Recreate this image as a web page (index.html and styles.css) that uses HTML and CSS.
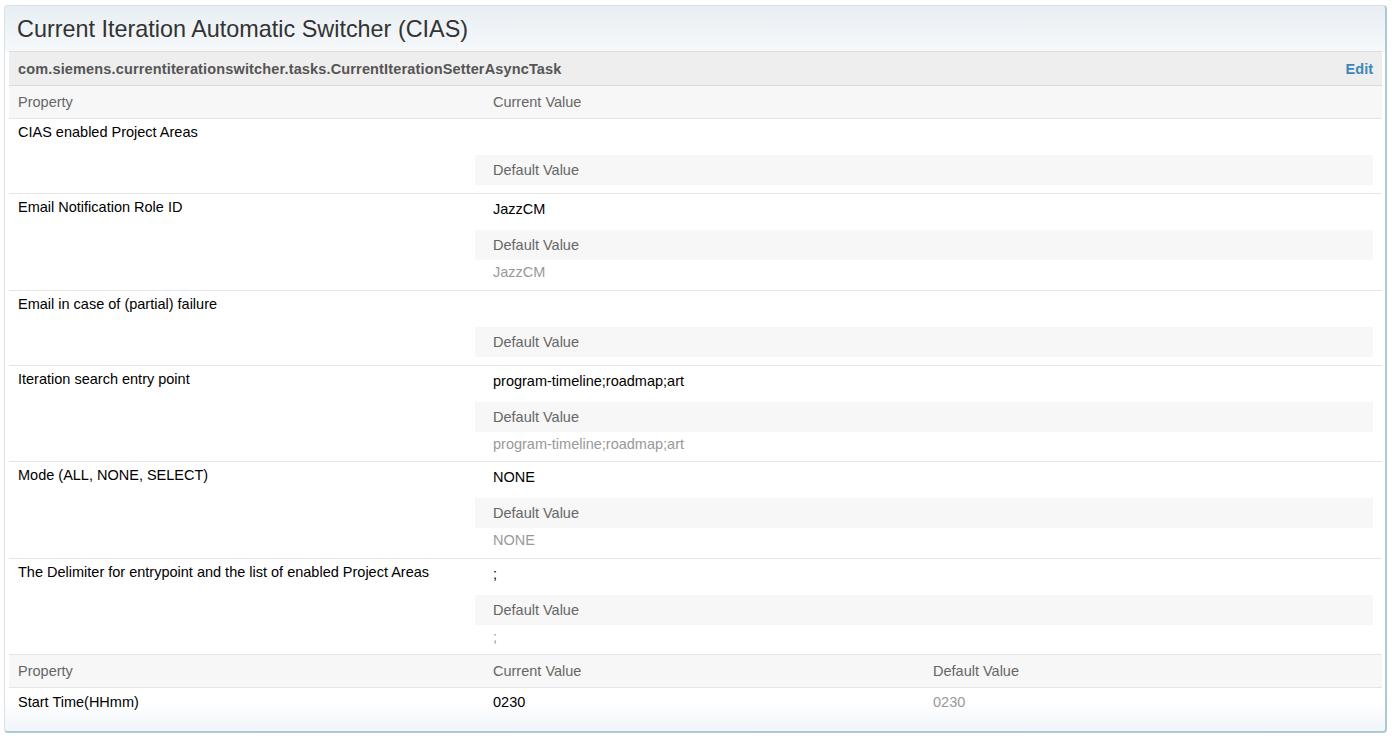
FILE: index.html
```html
<!DOCTYPE html>
<html>
<head>
<meta charset="utf-8">
<link rel="stylesheet" href="styles.css">
</head>
<body>
<div class="panel">
  <div class="title">Current Iteration Automatic Switcher (CIAS)</div>
  <div class="task">
    <span class="task-name">com.siemens.currentiterationswitcher.tasks.CurrentIterationSetterAsyncTask</span>
    <a class="edit">Edit</a>
  </div>
  <div class="head two">
    <div class="c1">Property</div>
    <div class="c2">Current Value</div>
  </div>

  <div class="row">
    <div class="label">CIAS enabled Project Areas</div>
    <div class="vals">
      <div class="cur"></div>
      <div class="defhead">Default Value</div>
      <div class="defval"></div>
    </div>
  </div>
  <div class="row">
    <div class="label">Email Notification Role ID</div>
    <div class="vals">
      <div class="cur">JazzCM</div>
      <div class="defhead">Default Value</div>
      <div class="defval">JazzCM</div>
    </div>
  </div>
  <div class="row">
    <div class="label">Email in case of (partial) failure</div>
    <div class="vals">
      <div class="cur"></div>
      <div class="defhead">Default Value</div>
      <div class="defval"></div>
    </div>
  </div>
  <div class="row">
    <div class="label">Iteration search entry point</div>
    <div class="vals">
      <div class="cur">program-timeline;roadmap;art</div>
      <div class="defhead">Default Value</div>
      <div class="defval">program-timeline;roadmap;art</div>
    </div>
  </div>
  <div class="row">
    <div class="label">Mode (ALL, NONE, SELECT)</div>
    <div class="vals">
      <div class="cur">NONE</div>
      <div class="defhead">Default Value</div>
      <div class="defval">NONE</div>
    </div>
  </div>
  <div class="row">
    <div class="label">The Delimiter for entrypoint and the list of enabled Project Areas</div>
    <div class="vals">
      <div class="cur">;</div>
      <div class="defhead">Default Value</div>
      <div class="defval">;</div>
    </div>
  </div>

  <div class="head three">
    <div class="c1">Property</div>
    <div class="c2">Current Value</div>
    <div class="c3">Default Value</div>
  </div>
  <div class="simple three">
    <div class="c1 label2">Start Time(HHmm)</div>
    <div class="c2 curval">0230</div>
    <div class="c3 defv">0230</div>
  </div>
</div>
</body>
</html>
```

FILE: styles.css
```css
html, body {
  margin: 0;
  padding: 0;
  background: #fff;
}
body {
  font-family: "Liberation Sans", Arial, sans-serif;
  font-size: 14.5px;
  color: #000;
}
.panel {
  box-sizing: border-box;
  width: 1383px;
  margin: 5px 0 0 4px;
  padding: 0 3px 16px 4px;
  border-style: solid;
  border-width: 1px 2px 2px 1px;
  border-color: #d6e2e9 #a9cad5 #a9cad5 #d6e2e9;
  border-radius: 4px;
  background:
    linear-gradient(to bottom, #e8eef3 0px, #f6f9fb 45px, #ffffff 46px, #ffffff calc(100% - 30px), #f0f5f9 100%);
}
.title {
  height: 45px;
  padding-left: 8px;
  font-size: 23.4px;
  line-height: 47px;
  color: #333;
}
.task {
  display: flex;
  justify-content: space-between;
  align-items: center;
  height: 33px;
  padding: 0 9px;
  border-top: 1px solid #dcdcdc;
  border-bottom: 1px solid #dcdcdc;
  background: #eeeeee;
  font-weight: bold;
  color: #555;
}
.task-name {
  letter-spacing: 0.15px;
}
.edit {
  color: #3a87b8;
  cursor: pointer;
}
.head {
  display: grid;
  height: 32px;
  align-items: center;
  background: #f7f7f7;
  color: #666;
  border-bottom: 1px solid #e5e5e5;
}
.two {
  grid-template-columns: 466px 1fr;
}
.three {
  display: grid;
  grid-template-columns: 466px 440px 1fr;
}
.c1 {
  padding-left: 9px;
}
.c2, .c3 {
  padding-left: 18px;
}
.row {
  display: grid;
  grid-template-columns: 466px 1fr;
  border-bottom: 1px solid #e5e5e5;
}
.label {
  padding: 5px 9px 0;
  line-height: 16px;
}
.vals {
  padding-right: 9px;
}
.cur {
  box-sizing: border-box;
  height: 36px;
  padding: 7px 18px 0;
  line-height: 16px;
}
.defhead {
  height: 30px;
  line-height: 30px;
  padding-left: 18px;
  background: #f7f7f7;
  color: #666;
}
.defval {
  padding: 2px 18px 7.5px;
  line-height: 20px;
  color: #999;
}
.defval:empty {
  padding: 4px 18px;
  height: 0;
}
.simple {
  height: 27px;
  align-items: center;
}
.label2 {
  color: #000;
}
.curval {
  color: #000;
}
.defv {
  color: #999;
}
```
